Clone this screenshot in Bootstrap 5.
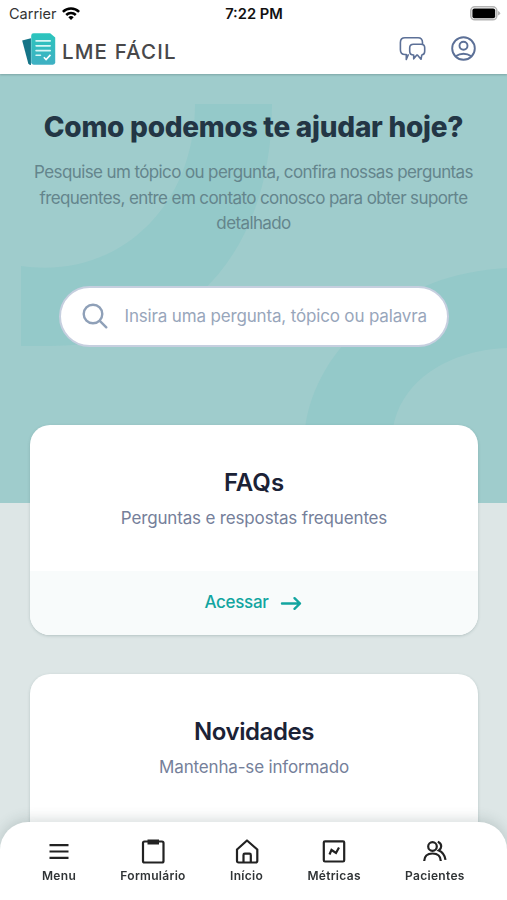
<!DOCTYPE html>
<html lang="pt-BR">
<head>
<meta charset="utf-8">
<meta name="viewport" content="width=device-width, initial-scale=1">
<title>LME Fácil</title>
<link href="https://cdn.jsdelivr.net/npm/bootstrap@5.3.0/dist/css/bootstrap.min.css" rel="stylesheet">
<style>
html,body{height:100%;overflow:hidden}
body{font-family:Inter,"Liberation Sans",sans-serif;background:#dde6e6}
svg{display:block;flex:none}
.status-bar{height:28px;padding:0 6px 0 9px;color:#111;font-size:14.5px;line-height:27px}
.status-side{width:120px;height:27px}
.carrier{color:#333}
.status-time{font-weight:600;font-size:14.7px;line-height:28px;padding-right:2px}
.top-bar{height:46px;padding:0 31px 0 21px}
.app-head{box-shadow:0 1px 2px rgba(60,90,90,.35);z-index:2}
.brand{gap:6px;padding-bottom:3px}
.brand-name{font-size:20.5px;font-weight:500;letter-spacing:1.15px;color:#48484a;line-height:30px;padding-top:5px}
.head-actions{gap:25px;padding-bottom:5px;color:#5c7097}
.hero{height:429px;background:#9fcccc}
.hero-art{left:0;top:0}
.hero-title{font-size:28px;font-weight:800;line-height:36px;color:#233645;padding-top:35px;letter-spacing:-.26px}
.hero-text{font-size:17px;line-height:25.5px;color:#64858c;padding-top:15px;letter-spacing:-.61px}
.search-box{width:390px;height:61px;border:2px solid #c6cfdf;margin-top:49px;padding-left:20px;gap:16px;color:#8fa0b8}
.search-hint{font-size:17px;color:#98a6bb;letter-spacing:-.16px;padding-top:2px}
.cards{margin:-78px 29px 0 30px;gap:39px}
.help-card{height:210px;border:0;border-radius:20px;overflow:hidden;box-shadow:0 1px 3px rgba(60,90,90,.25)}
.help-title{font-size:24px;font-weight:600;line-height:32px;color:#1b2236;padding-top:42px;letter-spacing:-.45px}
.help-title-short{letter-spacing:0}
.help-sub{font-size:17px;line-height:24px;color:#75809a;margin-top:7px;letter-spacing:-.16px}
.help-link{height:64px;background:#f8fbfb;color:#12a5a0;font-size:17px;font-weight:500;gap:11px;letter-spacing:-.3px;padding-right:2px}
.tab-bar{height:78px;border-radius:28px 28px 0 0;box-shadow:0 -2px 14px rgba(40,70,70,.2);color:#202426;z-index:3;padding:15px 0 0 42px;gap:44.3px}
.tab-item{font-size:12px;font-weight:600;line-height:16px;color:#303436;letter-spacing:.3px;gap:3px}
</style>
<script src="https://cdn.jsdelivr.net/npm/bootstrap@5.3.0/dist/js/bootstrap.bundle.min.js"></script>
</head>
<body class="d-flex flex-column">
<header class="app-head bg-white position-relative flex-shrink-0">
  <div class="status-bar d-flex justify-content-between">
    <div class="status-side d-flex align-items-center gap-1">
      <span class="carrier">Carrier</span>
      <svg width="20" height="15" viewBox="0 0 20 15" fill="none" stroke="#000" stroke-width="2.5"><path d="M1.9 5.8a11.6 11.6 0 0 1 16.2 0M5.2 9a6.9 6.9 0 0 1 9.6 0"/><path d="M10 14l-2.7-2.8a3.9 3.9 0 0 1 5.4 0z" fill="#000" stroke="none"/></svg>
    </div>
    <div class="status-time">7:22 PM</div>
    <div class="status-side d-flex align-items-center justify-content-end">
      <svg width="31" height="15" viewBox="0 0 31 15"><rect x=".8" y=".8" width="26" height="13" rx="4" fill="#fff" stroke="#b4b4b4" stroke-width="1.6"/><rect x="2.400" y="2.400" width="22.800" height="9.800" rx="2"/><path d="M28 5v4.600q2.200-.8 2.200-2.300T28 5z" fill="#b4b4b4"/></svg>
    </div>
  </div>
  <nav class="top-bar d-flex align-items-center justify-content-between">
    <div class="brand d-flex align-items-center">
      <svg width="35" height="35" viewBox="0 0 36 35"><defs><linearGradient id="page" x1="0" y1="0" x2="0" y2="1"><stop stop-color="#2bc5bd"/><stop offset="1" stop-color="#3fb0c3"/></linearGradient></defs><path d="M1.2 8.3l9-2.5v27.700q-2 .2-2.700-1.500z" fill="#157487"/><path d="M13 .8h17l5.200 4.400v25.500q0 2.500-2.500 2.500H13q-2.500 0-2.500-2.500V3.300Q10.500.8 13 .8z" fill="url(#page)"/><path d="M15.500 8.700H30M15.500 13.700H30M15.500 18.700H30M15.500 23.400H20" stroke="#d8f6f5" stroke-width="1.700" stroke-linecap="round"/><path d="M23.500 25.500l2.300 2.300 4.500-4.800" fill="none" stroke="#fff" stroke-width="1.700"/></svg>
      <span class="brand-name">LME FÁCIL</span>
    </div>
    <div class="head-actions d-flex align-items-center">
      <svg width="27" height="26" viewBox="0 0 27 26" fill="none" stroke="currentColor" stroke-width="1.600" stroke-linejoin="round"><path d="M9.500 18.300L7.300 23.500v-5H6q-4.600 0-4.600-4.700V6.500Q1.400 1.700 6 1.700H19q4.500 0 4.500 4.800V8"/><path d="M14.500 8.200H22q3.700 0 3.700 3.600v3.500q0 3.500-2.900 3.700l-.8 4.300-3.600-4.300h-.6l-3.100 3.800v-3.800q-4 0-4-3.700v-3.500q0-3.600 3.800-3.600z"/></svg>
      <svg width="25" height="25" viewBox="0 0 25 25" fill="none" stroke="currentColor" stroke-width="1.900"><circle cx="12.500" cy="12.500" r="11.300"/><circle cx="12.500" cy="9.800" r="4"/><path d="M4.500 20.300q8-5 16 0"/></svg>
    </div>
  </nav>
</header>
<main class="flex-shrink-0">
  <section class="hero position-relative text-center">
    <svg class="hero-art position-absolute" width="507" height="429" viewBox="0 74 507 429" fill="#94c9c9"><path d="M195 104H272C272 250 190 346 50 346H21V266C120 280 195 205 195 104z"/><path d="M507 268C400 273 315 345 305 430V503H393V430C400 380 450 350 507 348z"/><path d="M478 424h29v79h-29z" fill="#9fcccc"/></svg>
    <div class="position-relative">
      <h1 class="hero-title mb-0">Como podemos te ajudar hoje?</h1>
      <p class="hero-text mb-0">Pesquise um tópico ou pergunta, confira nossas perguntas<br>frequentes, entre em contato conosco para obter suporte<br>detalhado</p>
      <div class="search-box bg-white rounded-pill d-flex align-items-center mx-auto">
        <svg width="28" height="28" viewBox="0 0 28 28" fill="none" stroke="currentColor" stroke-width="2.400" stroke-linecap="round"><circle cx="12" cy="12" r="9.300"/><path d="M18.800 18.800l6.500 6.500"/></svg>
        <span class="search-hint">Insira uma pergunta, tópico ou palavra</span>
      </div>
    </div>
  </section>
  <div class="cards d-flex flex-column position-relative">
    <article class="card help-card text-center">
      <h2 class="help-title help-title-short mb-0">FAQs</h2>
      <p class="help-sub">Perguntas e respostas frequentes</p>
      <div class="help-link mt-auto d-flex justify-content-center align-items-center">
        <span>Acessar</span>
        <svg width="22" height="16" viewBox="0 0 22 16" fill="none" stroke="currentColor" stroke-width="2.400" stroke-linecap="round" stroke-linejoin="round"><path d="M2 8.500h18M14.500 3.200L20 8.500l-5.500 5.300"/></svg>
      </div>
    </article>
    <article class="card help-card text-center">
      <h2 class="help-title mb-0">Novidades</h2>
      <p class="help-sub">Mantenha-se informado</p>
    </article>
  </div>
</main>
<nav class="tab-bar fixed-bottom bg-white d-flex">
  <div class="tab-item d-flex flex-column align-items-center">
    <svg width="28" height="28" viewBox="0 0 28 28" fill="none" stroke="#222" stroke-width="2.200"><path d="M4.500 8.200h19M4.500 14.500h19M4.500 20.800h19"/></svg><span>Menu</span>
  </div>
  <div class="tab-item d-flex flex-column align-items-center">
    <svg width="28" height="28" viewBox="0 0 28 28" fill="none" stroke="#222" stroke-width="2.200"><rect x="4" y="4.500" width="20.500" height="21" rx="1.500"/><path d="M8.500 2.500h11.500v5H8.500z" fill="#222" stroke="none"/></svg><span>Formulário</span>
  </div>
  <div class="tab-item d-flex flex-column align-items-center">
    <svg width="28" height="28" viewBox="0 0 28 28" fill="none" stroke="#222" stroke-width="2.200" stroke-linejoin="round"><path d="M4 12.500L14 3.500l10.300 9v11.300q0 1.700-1.700 1.700h-17Q4 25.500 4 23.800z"/><path d="M10.500 25.500v-7.500q0-1.300 1.300-1.300h4.700q1.300 0 1.300 1.300v7.500"/></svg><span>Início</span>
  </div>
  <div class="tab-item d-flex flex-column align-items-center">
    <svg width="28" height="28" viewBox="0 0 28 28" fill="none" stroke="#222" stroke-width="2.200"><rect x="3.800" y="4.300" width="20.400" height="20.200" rx="1.200"/><path d="M9.500 17.500l2-4.500 4.500 3 3-5.500"/></svg><span>Métricas</span>
  </div>
  <div class="tab-item d-flex flex-column align-items-center">
    <svg width="28" height="28" viewBox="0 0 28 28" fill="none" stroke="#222" stroke-width="2.200"><circle cx="11.500" cy="9.500" r="4.300"/><path d="M3.200 24q.3-7.500 8.300-7.500t8.300 7.500M16.800 4.700q3.400 1.300 3.400 4.600 0 2.600-2.400 4.200 5.600 2.300 6.700 9.300"/></svg><span>Pacientes</span>
  </div>
</nav>
</body>
</html>
